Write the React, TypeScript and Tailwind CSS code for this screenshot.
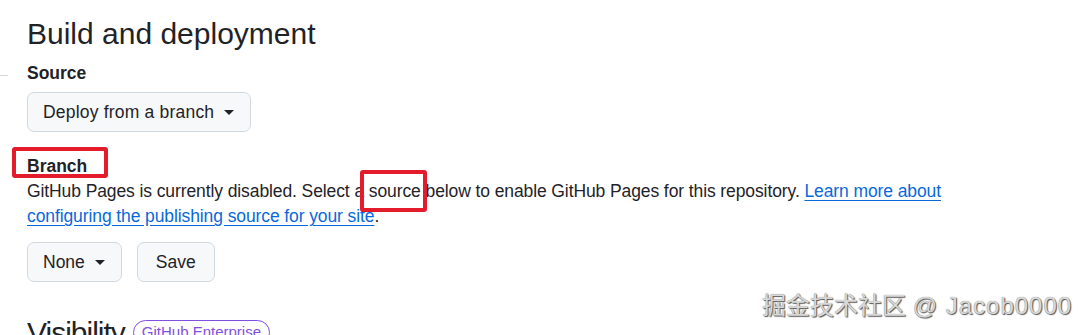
import React from "react";

const Caret = () => (
  <svg width="10" height="5" viewBox="0 0 10 5" className="ml-[10px]" aria-hidden>
    <path d="M0 0h10L5 5z" fill="#1f2328" />
  </svg>
);

export default function App() {
  const font = { fontFamily: '"Segoe UI", "Liberation Sans", Arial, sans-serif' };
  return (
    <div
      className="relative w-[1090px] h-[335px] overflow-hidden bg-white text-[#1f2328]"
      style={font}
    >
      <div className="absolute left-0 top-[75px] w-[8px] h-px bg-[#d0d7de]" />
      <div className="pl-[27px] pt-[11px]">
        <h2 className="text-[30px] leading-[45px] font-normal">Build and deployment</h2>
        <div className="mt-[5px] text-[17.5px] leading-[25px] font-semibold">Source</div>
        <div className="mt-[6px] flex">
          <button className="flex items-center h-[40px] pl-[15px] pr-[16px] border border-[#d1d9e0] bg-[#f6f8fa] rounded-[7px] text-[17.5px] font-medium tracking-[0.2px]">
            Deploy from a branch
            <Caret />
          </button>
        </div>
        <div className="mt-[22px] text-[17.5px] leading-[25px] font-semibold">
          <span className="relative">
            Branch
            <span className="absolute left-[-15px] top-[-9px] w-[96px] h-[31px] border-[4px] border-[#e31b2a] rounded-[3px]" />
          </span>
        </div>
        <p className="text-[17.5px] leading-[25px] w-[960px] tracking-[-0.1px]">
          GitHub Pages is currently disabled. Select a{" "}
          <span className="relative">
            source
            <span className="absolute left-[-9px] right-[-6px] top-[-11px] h-[42px] border-[4px] border-[#e31b2a] rounded-[3px]" />
          </span>{" "}
          below to enable GitHub Pages for this repository.{" "}
          <a className="text-[#0969da] underline underline-offset-[3px]">
            Learn more about configuring the publishing source for your site
          </a>
          .
        </p>
        <div className="mt-[13px] flex gap-[15px]">
          <button className="flex items-center h-[40px] pl-[15px] pr-[16px] border border-[#d1d9e0] bg-[#f6f8fa] rounded-[7px] text-[17.5px] font-medium">
            None
            <Caret />
          </button>
          <button className="flex items-center h-[40px] px-[18px] border border-[#d1d9e0] bg-[#f6f8fa] rounded-[7px] text-[17.5px] font-medium">
            Save
          </button>
        </div>
        <div className="mt-[28px] flex items-center gap-[8px]">
          <h2 className="text-[30px] leading-[45px] font-normal tracking-[-1px]">Visibility</h2>
          <span className="h-[25px] px-[8px] flex items-center border border-[#8250df] text-[#8250df] rounded-full text-[15px] font-medium">
            GitHub Enterprise
          </span>
        </div>
      </div>

      <div
        className="absolute left-[762px] top-[290px] text-[24px] leading-[32px] text-[#d8d8d8] whitespace-nowrap"
        style={{
          fontFamily: '"Liberation Sans", "Noto Sans CJK SC", sans-serif',
          textShadow: "1px 1px 1px #555, 0 0 1px #777",
        }}
      >
        掘金技术社区 <span className="tracking-[1px]">@ Jacob0000</span>
      </div>
    </div>
  );
}
